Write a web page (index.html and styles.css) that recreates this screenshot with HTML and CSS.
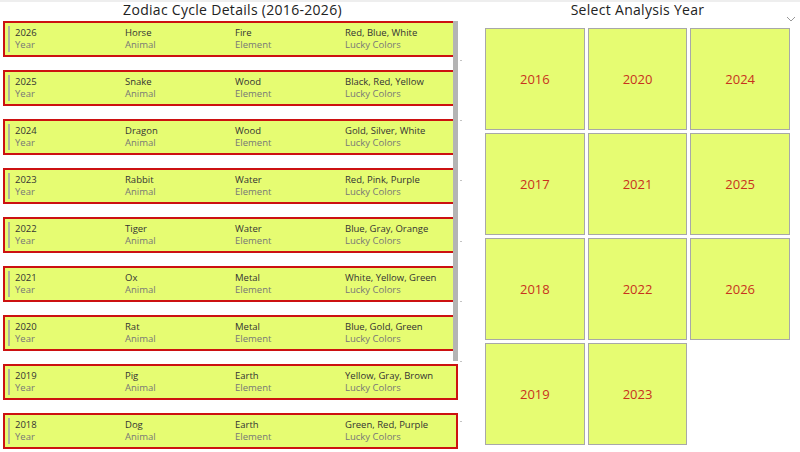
FILE: index.html
```html
<!DOCTYPE html>
<html lang="en">
<head>
    <meta charset="UTF-8">
    <meta name="viewport" content="width=device-width, initial-scale=1.0">
    <title>Zodiac Cycle</title>
    <link rel="stylesheet" href="styles.css">
</head>
<body>
    <div id="page">
        <div id="details">
            <h2 class="panel-title">Zodiac Cycle Details (2016-2026)</h2>
            <div id="card-list">
                <div class="card"><div class="col"><span class="val">2026</span><span class="lbl">Year</span></div><div class="col"><span class="val">Horse</span><span class="lbl">Animal</span></div><div class="col"><span class="val">Fire</span><span class="lbl">Element</span></div><div class="col"><span class="val">Red, Blue, White</span><span class="lbl">Lucky Colors</span></div></div>
                <div class="card"><div class="col"><span class="val">2025</span><span class="lbl">Year</span></div><div class="col"><span class="val">Snake</span><span class="lbl">Animal</span></div><div class="col"><span class="val">Wood</span><span class="lbl">Element</span></div><div class="col"><span class="val">Black, Red, Yellow</span><span class="lbl">Lucky Colors</span></div></div>
                <div class="card"><div class="col"><span class="val">2024</span><span class="lbl">Year</span></div><div class="col"><span class="val">Dragon</span><span class="lbl">Animal</span></div><div class="col"><span class="val">Wood</span><span class="lbl">Element</span></div><div class="col"><span class="val">Gold, Silver, White</span><span class="lbl">Lucky Colors</span></div></div>
                <div class="card"><div class="col"><span class="val">2023</span><span class="lbl">Year</span></div><div class="col"><span class="val">Rabbit</span><span class="lbl">Animal</span></div><div class="col"><span class="val">Water</span><span class="lbl">Element</span></div><div class="col"><span class="val">Red, Pink, Purple</span><span class="lbl">Lucky Colors</span></div></div>
                <div class="card"><div class="col"><span class="val">2022</span><span class="lbl">Year</span></div><div class="col"><span class="val">Tiger</span><span class="lbl">Animal</span></div><div class="col"><span class="val">Water</span><span class="lbl">Element</span></div><div class="col"><span class="val">Blue, Gray, Orange</span><span class="lbl">Lucky Colors</span></div></div>
                <div class="card"><div class="col"><span class="val">2021</span><span class="lbl">Year</span></div><div class="col"><span class="val">Ox</span><span class="lbl">Animal</span></div><div class="col"><span class="val">Metal</span><span class="lbl">Element</span></div><div class="col"><span class="val">White, Yellow, Green</span><span class="lbl">Lucky Colors</span></div></div>
                <div class="card"><div class="col"><span class="val">2020</span><span class="lbl">Year</span></div><div class="col"><span class="val">Rat</span><span class="lbl">Animal</span></div><div class="col"><span class="val">Metal</span><span class="lbl">Element</span></div><div class="col"><span class="val">Blue, Gold, Green</span><span class="lbl">Lucky Colors</span></div></div>
                <div class="card"><div class="col"><span class="val">2019</span><span class="lbl">Year</span></div><div class="col"><span class="val">Pig</span><span class="lbl">Animal</span></div><div class="col"><span class="val">Earth</span><span class="lbl">Element</span></div><div class="col"><span class="val">Yellow, Gray, Brown</span><span class="lbl">Lucky Colors</span></div></div>
                <div class="card"><div class="col"><span class="val">2018</span><span class="lbl">Year</span></div><div class="col"><span class="val">Dog</span><span class="lbl">Animal</span></div><div class="col"><span class="val">Earth</span><span class="lbl">Element</span></div><div class="col"><span class="val">Green, Red, Purple</span><span class="lbl">Lucky Colors</span></div></div>
                <div id="scrollbar"></div>
            </div>
        </div>
        <div id="slicer">
            <h2 class="panel-title">Select Analysis Year</h2>
            <span id="chevron">
                <svg width="10" height="6" viewBox="0 0 10 6"><path d="M1 1 L5 5 L9 1" fill="none" stroke="#999" stroke-width="1"/></svg>
            </span>
            <div id="tiles">
                <div class="tile">2016</div>
                <div class="tile">2017</div>
                <div class="tile">2018</div>
                <div class="tile">2019</div>
                <div class="tile">2020</div>
                <div class="tile">2021</div>
                <div class="tile">2022</div>
                <div class="tile">2023</div>
                <div class="tile">2024</div>
                <div class="tile">2025</div>
                <div class="tile">2026</div>
            </div>
        </div>
    </div>
</body>
</html>
```

FILE: styles.css
```css
body {
    margin: 0;
    padding: 0;
    font-family: 'Open Sans', 'Noto Sans', sans-serif;
    background: white;
    overflow: hidden;
}
#page {
    display: flex;
    height: 452px;
    border-top: 2px solid #eee;
    box-sizing: border-box;
}
.panel-title {
    margin: 0;
    font-size: 14px;
    font-weight: normal;
    color: #222;
    text-align: center;
    line-height: 16px;
    letter-spacing: 0.3px;
}
#details {
    width: 462px;
    padding-left: 3px;
    box-sizing: border-box;
    background-image: repeating-linear-gradient(to bottom, transparent 0 58px, #c4c4c4 58px 59px, transparent 59px 60.2px);
    background-size: 2px 100%;
    background-position: 460px 0;
    background-repeat: no-repeat;
}
#card-list {
    position: relative;
    margin-top: 3px;
    display: flex;
    flex-direction: column;
    gap: 13px;
}
.card {
    height: 36px;
    box-sizing: border-box;
    border: 2px solid #cc1111;
    background: #e6fc72;
    display: flex;
    align-items: center;
    padding-left: 10px;
    position: relative;
    width: 455px;
}
.card::before {
    content: "";
    position: absolute;
    left: 3px;
    top: 3px;
    bottom: 3px;
    width: 2px;
    background: #b0b0a0;
}
.col {
    width: 110px;
    display: flex;
    flex-direction: column;
    font-size: 9.5px;
    line-height: 12.5px;
}
.val {
    color: #333;
}
.lbl {
    color: #777;
}
#scrollbar {
    position: absolute;
    left: 450px;
    top: 0;
    width: 5px;
    height: 340px;
    background: #b4b4b4;
}
#slicer {
    position: relative;
    width: 338px;
    padding-left: 23px;
    padding-right: 10px;
    box-sizing: border-box;
}
#chevron {
    position: absolute;
    right: 4px;
    top: 14px;
    line-height: 0;
}
#tiles {
    margin-top: 10px;
    display: grid;
    grid-template-columns: repeat(3, 1fr);
    grid-template-rows: repeat(4, 102px);
    grid-auto-flow: column;
    gap: 3px;
}
.tile {
    background: #e6fc72;
    border: 1.5px solid #a8a8a8;
    display: flex;
    align-items: center;
    justify-content: center;
    color: #c8321e;
    font-size: 13px;
}
```
